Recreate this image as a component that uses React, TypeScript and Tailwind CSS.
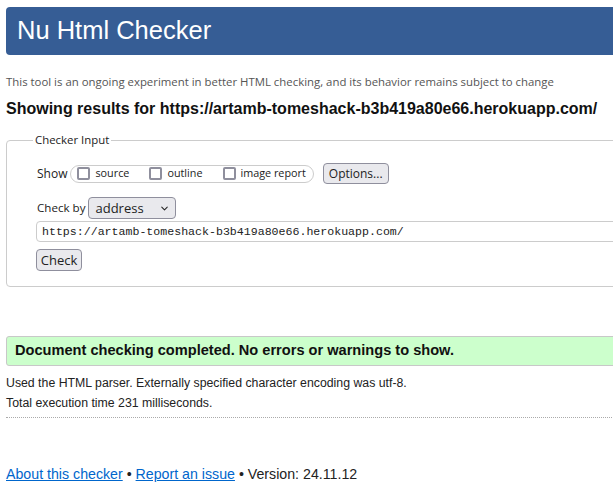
import { ChevronDown } from "lucide-react";

function Box({ label, gap }: { label: string; gap?: boolean }) {
  return (
    <span className={`flex items-center ${gap ? "ml-[20px]" : ""}`}>
      <span className="h-[13px] w-[13px] rounded-[2px] border-2 border-[#8f8f9d] bg-white" />
      <span className="ml-[5px] text-[10.8px] leading-none">{label}</span>
    </span>
  );
}

export default function App() {
  return (
    <div className="h-[492px] w-full overflow-hidden bg-white">
      <div className="w-[680px] pl-[6px] pt-[7px] font-['Liberation_Sans',Arial,sans-serif] text-[#222]">
        {/* Header */}
        <h1 className="h-[48px] rounded-[4px] bg-[#365d95] pl-[11px] text-[25.5px] leading-[46px] text-white">
          Nu Html Checker
        </h1>

        <p className="mt-[19px] font-['Open_Sans',sans-serif] text-[11.4px] leading-[16px] text-[#555]">
          This tool is an ongoing experiment in better HTML checking, and its behavior remains subject to change
        </p>

        <h2 className="mt-[9px] text-[16px] font-bold leading-[20px] text-[#111]">
          Showing results for https://artamb-tomeshack-b3b419a80e66.herokuapp.com/
        </h2>

        {/* Checker input */}
        <fieldset className="mt-[12px] rounded-[4px] border border-[#ccc] px-[26px] pb-[15px] pt-[14px] font-['Open_Sans',sans-serif] text-[#222]">
          <legend className="px-[2px] text-[11.4px] leading-[18px]">Checker Input</legend>

          <div className="ml-[3px]">
            <div className="flex h-[21px] items-center pl-[1px]">
              <span className="text-[12px]">Show</span>
              <div className="ml-[3px] flex h-[18px] items-center rounded-[9px] border border-[#ccc] pl-[6px] pr-[7px]">
                <Box label="source" />
                <Box label="outline" gap />
                <Box label="image report" gap />
              </div>
              <button className="ml-[9px] h-[21px] rounded-[4px] border border-[#8f8f9d] bg-[#e9e9ed] px-[5px] text-[12px] leading-none">
                Options...
              </button>
            </div>

            <div className="mt-[13px] flex h-[22px] items-center pl-[1px]">
              <span className="text-[11.6px]">Check by</span>
              <div className="ml-[3px] flex h-[22px] w-[88px] items-center justify-between rounded-[4px] border border-[#8f8f9d] bg-[#e9e9ed] pl-[6px] pr-[5px]">
                <span className="text-[13px] leading-none">address</span>
                <ChevronDown size={11} strokeWidth={2.2} />
              </div>
            </div>

            <div className="mt-[2px] flex h-[21px] items-center rounded-[4px] border border-[#ccc] pl-[5px]">
              <span className="font-['Liberation_Mono',monospace] text-[11.6px] leading-none">
                https://artamb-tomeshack-b3b419a80e66.herokuapp.com/
              </span>
            </div>

            <button className="mt-[7px] block h-[22px] w-[46px] rounded-[4px] border border-[#8f8f9d] bg-[#e9e9ed] text-[13px] leading-none">
              Check
            </button>
          </div>
        </fieldset>

        {/* Result */}
        <div className="mt-[49px] flex h-[30px] items-center rounded-[3px] border border-[#c8c8c8] bg-[#ccffcc] pl-[8px]">
          <span className="text-[14.6px] font-bold text-[#111]">
            Document checking completed. No errors or warnings to show.
          </span>
        </div>

        <div className="mt-[7px] border-b border-dotted border-[#aaa] pb-[4px] text-[12.3px] leading-[20px]">
          <p>Used the HTML parser. Externally specified character encoding was utf-8.</p>
          <p>Total execution time 231 milliseconds.</p>
        </div>

        <p className="mt-[47px] text-[14.2px] leading-[18px]">
          <a href="#" className="text-[#0066cc] underline">About this checker</a>
          {" • "}
          <a href="#" className="text-[#0066cc] underline">Report an issue</a>
          {" • Version: 24.11.12"}
        </p>
      </div>
    </div>
  );
}
